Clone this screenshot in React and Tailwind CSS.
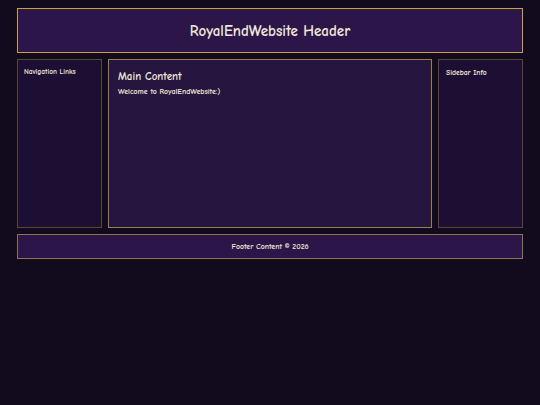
export default function App() {
  return (
    <div
      className="min-h-[405px] bg-[#120b1e] px-[17px] pt-[8px] text-[#f1e8d8]"
      style={{ fontFamily: '"Comic Sans MS", "Comic Neue", cursive, sans-serif' }}
    >
      <header className="flex h-[45px] items-center justify-center border border-[#c9a33a] bg-[#2b1549]">
        <h1 className="mt-[1px] text-[15px] font-semibold leading-none">RoyalEndWebsite Header</h1>
      </header>

      <div className="mt-[6px] flex h-[169px] gap-[6px]">
        <nav className="w-[85px] border border-[#5c4532] bg-[#1d0e33] px-[6px] py-[7px] text-[7.3px] font-semibold">
          Navigation Links
        </nav>
        <main className="flex-1 border border-[#9a7f4c] bg-[#25153f] px-[9px] pt-[11px]">
          <h2 className="text-[11px] font-extrabold leading-none">Main Content</h2>
          <p className="mt-[4px] text-[7.8px] font-semibold">Welcome to RoyalEndWebsite:)</p>
        </main>
        <aside className="w-[85px] border border-[#5c4532] bg-[#1d0e33] px-[7px] py-[7px] text-[7.6px] font-semibold">
          Sidebar Info
        </aside>
      </div>

      <footer className="mt-[6px] flex h-[25px] items-center justify-center border border-[#8a7456] bg-[#2b1549] text-[7.8px] font-semibold">
        Footer Content © 2026
      </footer>
    </div>
  );
}
